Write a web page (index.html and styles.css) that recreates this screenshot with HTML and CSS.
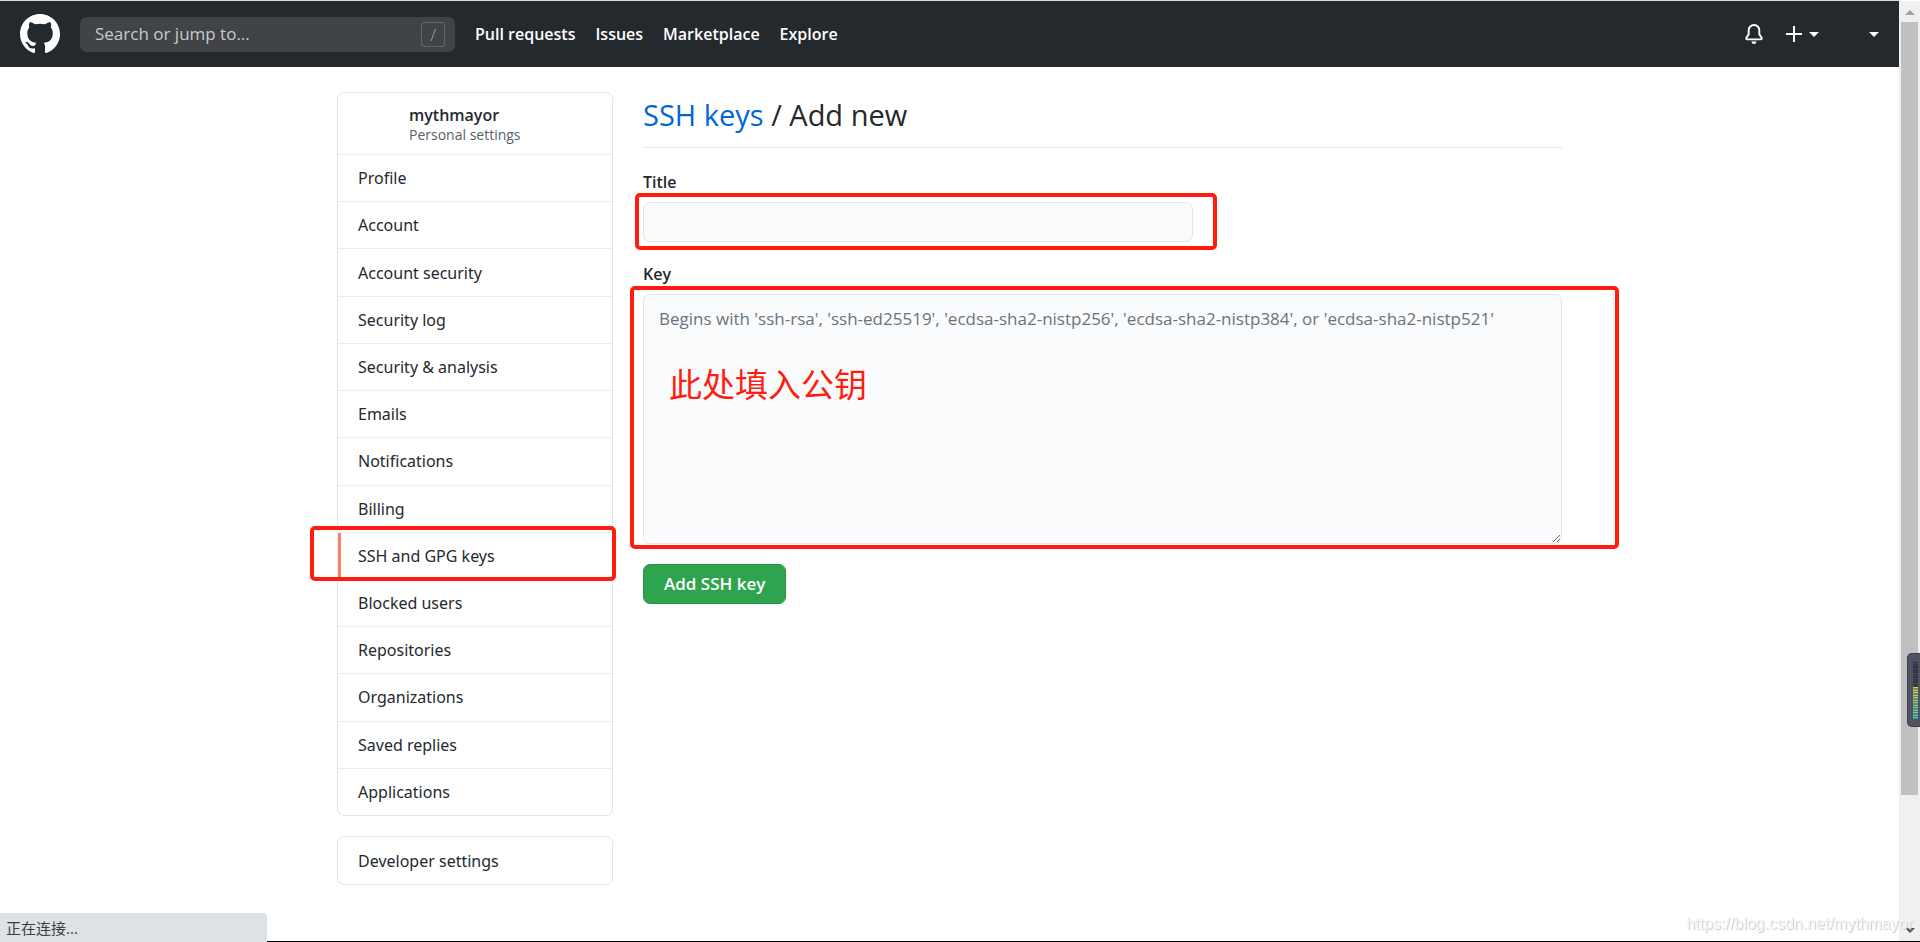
FILE: index.html
```html
<!DOCTYPE html>
<html lang="en">
<head>
<meta charset="utf-8">
<title>Add new SSH key</title>
<link rel="stylesheet" href="styles.css">
</head>
<body>
<div class="page">
  <header class="header">
    <a class="logo" href="#" aria-label="GitHub">
      <svg viewBox="0 0 16 16" width="40" height="40" fill="currentColor"><path fill-rule="evenodd" d="M8 0C3.58 0 0 3.58 0 8c0 3.54 2.29 6.53 5.47 7.59.4.07.55-.17.55-.38 0-.19-.01-.82-.01-1.49-2.01.37-2.53-.49-2.69-.94-.09-.23-.48-.94-.82-1.13-.28-.15-.68-.52-.01-.53.63-.01 1.08.58 1.23.82.72 1.21 1.87.87 2.33.66.07-.52.28-.87.51-1.07-1.78-.2-3.64-.89-3.64-3.95 0-.87.31-1.59.82-2.15-.08-.2-.36-1.02.08-2.12 0 0 .67-.21 2.2.82.64-.18 1.32-.27 2-.27s1.36.09 2 .27c1.53-1.04 2.2-.82 2.2-.82.44 1.1.16 1.92.08 2.12.51.56.82 1.27.82 2.15 0 3.07-1.87 3.75-3.65 3.95.29.25.54.73.54 1.48 0 1.07-.01 1.93-.01 2.2 0 .21.15.46.55.38A8.01 8.01 0 0016 8c0-4.42-3.58-8-8-8z"/></svg>
    </a>
    <label class="search">
      <input class="search-input" type="text" placeholder="Search or jump to..." aria-label="Search or jump to">
      <span class="slash"><svg viewBox="0 0 24 25" width="24" height="25" fill="none" stroke="currentColor"><path d="M10 19 14.500 7"/></svg></span>
    </label>
    <nav class="nav">
      <a href="#">Pull requests</a>
      <a href="#">Issues</a>
      <a href="#">Marketplace</a>
      <a href="#">Explore</a>
    </nav>
    <div class="actions">
      <button class="icon-button" aria-label="Notifications"><svg viewBox="0 0 16 16" width="20" height="20" fill="currentColor"><path d="M8 16a2 2 0 001.985-1.750c.017-.137-.097-.25-.235-.25h-3.500c-.138 0-.252.113-.235.25A2 2 0 008 16z"/><path fill-rule="evenodd" d="M8 1.500A3.500 3.500 0 004.500 5v2.947c0 .346-.102.683-.294.97l-1.703 2.556a.018.018 0 00-.003.01l.001.006c0 .002.002.004.004.006a.017.017 0 00.006.004l.007.001h10.964l.007-.001a.016.016 0 00.006-.004.016.016 0 00.004-.006l.001-.007a.017.017 0 00-.003-.01l-1.703-2.554a1.750 1.750 0 01-.294-.97V5A3.500 3.500 0 008 1.500zM3 5a5 5 0 0110 0v2.947c0 .05.015.098.042.139l1.703 2.555A1.518 1.518 0 0113.482 13H2.518a1.518 1.518 0 01-1.263-2.360l1.703-2.554A.25.25 0 003 7.947V5z"/></svg></button>
      <button class="icon-button" aria-label="Create new"><svg viewBox="0 0 16 16" width="16" height="16" stroke="currentColor" stroke-width="2"><path d="M8 0v16M0 8h16"/></svg><span class="caret"></span></button>
      <button class="icon-button account" aria-label="Account menu"><span class="caret"></span></button>
    </div>
  </header>

  <div class="layout">
    <aside class="sidebar">
      <nav class="menu" aria-label="Personal settings">
        <div class="profile"><strong>mythmayor</strong><span>Personal settings</span></div>
        <a class="item" href="#">Profile</a>
        <a class="item" href="#">Account</a>
        <a class="item" href="#">Account security</a>
        <a class="item" href="#">Security log</a>
        <a class="item" href="#">Security &amp; analysis</a>
        <a class="item" href="#">Emails</a>
        <a class="item" href="#">Notifications</a>
        <a class="item" href="#">Billing</a>
        <a class="item current" href="#" aria-current="page">SSH and GPG keys<span class="mark mark-item"></span></a>
        <a class="item" href="#">Blocked users</a>
        <a class="item" href="#">Repositories</a>
        <a class="item" href="#">Organizations</a>
        <a class="item" href="#">Saved replies</a>
        <a class="item" href="#">Applications</a>
      </nav>
      <nav class="menu developer" aria-label="Developer"><a class="item" href="#">Developer settings</a></nav>
    </aside>

    <main class="main">
      <h1 class="heading"><a href="#">SSH keys</a> / Add new</h1>
      <form class="form">
        <label class="label" for="key-title">Title</label>
        <div class="field field-title"><input class="control" id="key-title" type="text"><span class="mark mark-title"></span></div>
        <label class="label" for="key-body">Key</label>
        <div class="field"><textarea class="control key" id="key-body" placeholder="Begins with 'ssh-rsa', 'ssh-ed25519', 'ecdsa-sha2-nistp256', 'ecdsa-sha2-nistp384', or 'ecdsa-sha2-nistp521'"></textarea><span class="mark mark-key"></span><span class="note" lang="zh-CN">此处填入公钥</span></div>
        <button class="submit" type="button">Add SSH key</button>
      </form>
    </main>
  </div>
</div>

<div class="scrollbar" aria-hidden="true">
  <span class="arrow arrow-up"></span>
  <span class="track"><span class="thumb"></span></span>
  <span class="arrow arrow-down"></span>
</div>
<div class="meter" aria-hidden="true"><span class="meter-off"></span><span class="meter-on"></span></div>
<div class="watermark">https://blog.csdn.net/mythmayor</div>
<div class="bottom-line"></div>
<div class="status" lang="zh-CN">正在连接...</div>
</body>
</html>
```
FILE: styles.css
```css
* { box-sizing: border-box; }

body {
  margin: 0;
  background: #fff;
  color: #24292e;
  font: 16px/24px "Noto Sans", "Open Sans", "Noto Sans CJK SC", sans-serif;
}

a { color: inherit; text-decoration: none; }
input, textarea, button { font: inherit; }

.page {
  min-height: 100vh;
  margin-right: 21px;
  border-top: 1px solid #d9dde1;
}

.header {
  display: flex;
  align-items: center;
  min-height: 66px;
  padding: 0 20px;
  gap: 20px;
  background: #24292e;
  color: #fff;
}

.logo { display: flex; }

.search {
  display: flex;
  align-items: center;
  width: 375px;
  height: 35px;
  padding: 0 10px 0 15px;
  border-radius: 7px;
  background: #404448;
}

.search-input {
  flex: 1;
  min-width: 0;
  padding: 0;
  border: 0;
  outline: 0;
  background: none;
  color: #fff;
  font-family: "Open Sans", sans-serif;
  font-size: 17px;
}

.search-input::placeholder { color: #c8cacc; opacity: 1; }

.slash {
  display: flex;
  border-radius: 4px;
  box-shadow: inset 0 0 0 1px #65696c;
  color: #9a9da0;
}

.nav {
  display: flex;
  gap: 20px;
  font-family: "Open Sans", sans-serif;
  font-weight: 600;
}

.actions { display: flex; align-items: center; margin-left: auto; }

.icon-button {
  display: flex;
  align-items: center;
  padding: 0;
  gap: 7px;
  border: 0;
  margin-right: 22px;
  background: none;
  color: #fff;
}

.account { margin: 0 0 0 28px; }

.caret {
  border: 5px solid transparent;
  border-top-color: currentColor;
  border-bottom: 0;
}

.layout {
  display: flex;
  align-items: flex-start;
  gap: 30px;
  max-width: 1225px;
  margin: 25px auto 0;
}

.sidebar {
  display: grid;
  flex: none;
  gap: 20px;
  width: 276px;
}

.menu {
  display: grid;
  grid-template-rows: auto;
  grid-auto-rows: 1fr;
  min-height: 724px;
  border: 1px solid #e1e4e8;
  border-radius: 7px;
}

.developer { min-height: 49px; }

.profile {
  display: flex;
  flex-direction: column;
  padding: 12px 15px 10px 71px;
  font-family: "Open Sans", sans-serif;
  line-height: 20px;
}

.profile strong { font-weight: 600; }
.profile span { color: #586069; font-size: 14px; line-height: 19px; }

.item {
  display: flex;
  position: relative;
  align-items: center;
  padding: 0 20px;
}

.current { z-index: 1; }

.menu > * + .item { border-top: 1px solid #eaecef; }

.current::before {
  position: absolute;
  inset: 0 auto 0 0;
  width: 3px;
  background: #f9826c;
  content: "";
}

.main { flex: 1; min-width: 0; }

.heading {
  padding: 2px 0 12px;
  border-bottom: 1px solid #e1e4e8;
  margin: 0;
  font-size: 29px;
  font-family: "Open Sans", sans-serif;
  font-weight: 400;
  line-height: 41px;
}

.heading a { color: #0366d6; }

.form { display: flex; flex-direction: column; align-items: flex-start; padding-top: 22px; }

.label {
  margin-bottom: 8px;
  font-family: "Open Sans", sans-serif;
  font-weight: 600;
}

.field { position: relative; width: 100%; margin-bottom: 20px; }
.field-title { max-width: 550px; }

.control {
  display: block;
  width: 100%;
  height: 40px;
  padding: 6px 15px;
  border: 1px solid #e1e4e8;
  border-radius: 7px;
  outline: 0;
  background: #fafbfc;
  color: #24292e;
  font-family: "Open Sans", sans-serif;
  font-size: 17px;
}

.key { height: 250px; padding: 12px 15px; resize: vertical; }
.key::placeholder { color: #6a737d; opacity: 1; }

.submit {
  height: 40px;
  padding: 0 20px;
  border: 1px solid #2a9147;
  border-radius: 7px;
  background: #2ea44f;
  color: #fff;
  font-family: "Open Sans", sans-serif;
  font-size: 17px;
  font-weight: 600;
}

/* Red annotation frames over the page */
.mark {
  position: absolute;
  border: 4px solid #ff1d10;
  border-radius: 5px;
  pointer-events: none;
}

.mark-item { inset: -7px -4px -2px -28px; }
.mark-title { inset: -9px -24px -8px -8px; }
.mark-key { inset: -8px -57px -5px -13px; }

.note {
  position: absolute;
  top: 65px;
  left: 26px;
  color: #ff1d10;
  font-family: "Noto Sans CJK SC", sans-serif;
  font-size: 33px;
  line-height: 48px;
}

.scrollbar {
  display: flex;
  position: fixed;
  inset: 1px 0 0 auto;
  flex-direction: column;
  align-items: center;
  width: 21px;
  padding: 9px 2px;
  background: #f0f0f0;
}

.arrow { border: 5px solid transparent; }
.arrow-up { border-top: 0; border-bottom-color: #a0a0a0; }
.arrow-down { border-top-color: #505050; border-bottom: 0; }
.track { flex: 1; width: 17px; padding: 7px 0; }
.thumb { display: block; height: 86%; background: #c0c0c0; }

.meter {
  display: flex;
  position: fixed;
  top: 653px;
  right: 0;
  flex-direction: column;
  width: 13px;
  padding: 8px 2px 7px 5px;
  border: 1px solid #3b3e4c;
  border-right: 0;
  border-radius: 5px 0 0 5px;
  background: #4e5262;
}

.meter-off { height: 25px; background: repeating-linear-gradient(#30333f 0 1px, #434655 1px 2px, #353845 2px 5px); }
.meter-on {
  height: 32px;
  background:
    repeating-linear-gradient(transparent 0 1px, #3b4b5588 1px 3px, transparent 3px 4px, #3b4b5599 4px 5px),
    linear-gradient(#dcd545, #8bd17b 50%, #3fd0bd);
}

.watermark {
  position: fixed;
  right: 7px;
  bottom: 6px;
  color: #f7f7f7;
  font-family: "Liberation Sans", sans-serif;
  text-shadow: 1px 1px 1px #c8c8c8;
}

.bottom-line { position: fixed; inset: auto 0 0; height: 1px; background: #000; }

.status {
  position: fixed;
  bottom: 0;
  left: 0;
  width: 267px;
  padding: 3px 6px 2px;
  border-top-right-radius: 4px;
  background: #dee1e6;
  color: #3c4043;
  font-family: "Open Sans", "Noto Sans CJK SC", sans-serif;
  font-size: 15px;
}
```
